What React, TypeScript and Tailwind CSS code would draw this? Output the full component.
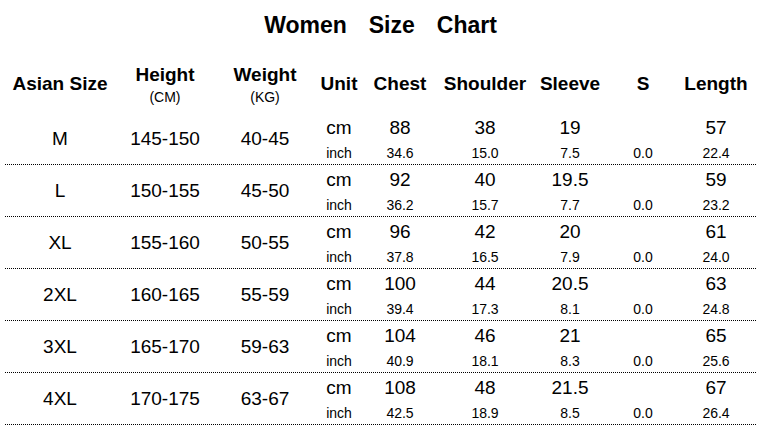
const ROWS = [
  { size: 'M', height: '145-150', weight: '40-45', cm: ['88', '38', '19', '', '57'], inch: ['34.6', '15.0', '7.5', '0.0', '22.4'] },
  { size: 'L', height: '150-155', weight: '45-50', cm: ['92', '40', '19.5', '', '59'], inch: ['36.2', '15.7', '7.7', '0.0', '23.2'] },
  { size: 'XL', height: '155-160', weight: '50-55', cm: ['96', '42', '20', '', '61'], inch: ['37.8', '16.5', '7.9', '0.0', '24.0'] },
  { size: '2XL', height: '160-165', weight: '55-59', cm: ['100', '44', '20.5', '', '63'], inch: ['39.4', '17.3', '8.1', '0.0', '24.8'] },
  { size: '3XL', height: '165-170', weight: '59-63', cm: ['104', '46', '21', '', '65'], inch: ['40.9', '18.1', '8.3', '0.0', '25.6'] },
  { size: '4XL', height: '170-175', weight: '63-67', cm: ['108', '48', '21.5', '', '67'], inch: ['42.5', '18.9', '8.5', '0.0', '26.4'] },
];

const COLS = 'grid grid-cols-[110px_100px_100px_48px_74px_96px_74px_72px_74px]';

export default function App() {
  return (
    <div className="w-[761px] h-[430px] bg-white text-black overflow-hidden font-['Liberation_Sans',Arial,sans-serif]">
      <div className="h-[56px] flex items-center justify-center gap-[22px] text-[23px] font-bold pb-[6px]">
        <span>Women</span>
        <span>Size</span>
        <span>Chart</span>
      </div>

      <div className={`${COLS} h-[57px] px-[5px] items-center text-center text-[19px] font-bold`}>
        <div>Asian Size</div>
        <div className="flex flex-col">
          <span className="leading-[24px]">Height</span>
          <span className="leading-[20px] text-[14px] font-normal">(CM)</span>
        </div>
        <div className="flex flex-col">
          <span className="leading-[24px]">Weight</span>
          <span className="leading-[20px] text-[14px] font-normal">(KG)</span>
        </div>
        <div>Unit</div>
        <div>Chest</div>
        <div>Shoulder</div>
        <div>Sleeve</div>
        <div>S</div>
        <div>Length</div>
      </div>

      <div className="px-[5px]">
        {ROWS.map(r => (
          <div
            key={r.size}
            className={`${COLS} grid-rows-[30px_21px] border-b border-dotted border-black text-center`}
          >
            <div className="row-span-2 flex items-center justify-center pt-[2px] text-[19px]">{r.size}</div>
            <div className="row-span-2 flex items-center justify-center pt-[2px] text-[19px]">{r.height}</div>
            <div className="row-span-2 flex items-center justify-center pt-[2px] text-[19px]">{r.weight}</div>
            <div className="flex items-center justify-center text-[19px]">cm</div>
            {r.cm.map((v, i) => (
              <div key={'c' + i} className="flex items-center justify-center text-[19px]">{v}</div>
            ))}
            <div className="flex items-center justify-center text-[14px]">inch</div>
            {r.inch.map((v, i) => (
              <div key={'i' + i} className="flex items-center justify-center text-[14px]">{v}</div>
            ))}
          </div>
        ))}
      </div>
    </div>
  );
}
